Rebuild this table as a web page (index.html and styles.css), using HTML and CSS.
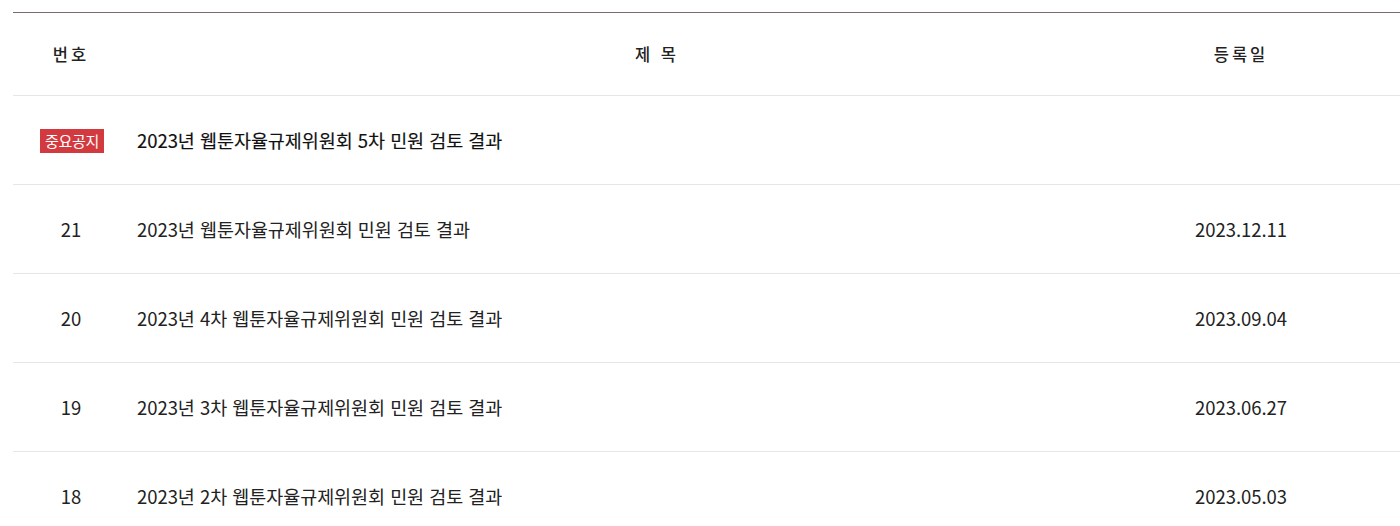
FILE: index.html
```html
<!DOCTYPE html>
<html lang="ko">
<head>
<meta charset="utf-8">
<link rel="stylesheet" href="styles.css">
</head>
<body>
<div class="board">
  <div class="row head">
    <div class="c-num">번호</div>
    <div class="c-title">제 목</div>
    <div class="c-date">등록일</div>
    <div></div>
  </div>
  <div class="row notice">
    <div class="c-num"><span class="badge">중요공지</span></div>
    <div class="c-title">2023년 웹툰자율규제위원회 5차 민원 검토 결과</div>
    <div class="c-date"></div>
    <div></div>
  </div>
  <div class="row">
    <div class="c-num">21</div>
    <div class="c-title">2023년 웹툰자율규제위원회 민원 검토 결과</div>
    <div class="c-date">2023.12.11</div>
    <div></div>
  </div>
  <div class="row">
    <div class="c-num">20</div>
    <div class="c-title">2023년 4차 웹툰자율규제위원회 민원 검토 결과</div>
    <div class="c-date">2023.09.04</div>
    <div></div>
  </div>
  <div class="row">
    <div class="c-num">19</div>
    <div class="c-title">2023년 3차 웹툰자율규제위원회 민원 검토 결과</div>
    <div class="c-date">2023.06.27</div>
    <div></div>
  </div>
  <div class="row">
    <div class="c-num">18</div>
    <div class="c-title">2023년 2차 웹툰자율규제위원회 민원 검토 결과</div>
    <div class="c-date">2023.05.03</div>
    <div></div>
  </div>
</div>
</body>
</html>
```

FILE: styles.css
```css
html, body {
  margin: 0;
  padding: 0;
  background: #fff;
}
body {
  font-family: "Noto Sans CJK KR", "Noto Sans", sans-serif;
  color: #222;
  overflow: hidden;
}
.board {
  margin: 12px 0 0 13px;
  border-top: 1px solid #7d6b6b;
}
.row {
  display: grid;
  grid-template-columns: 116px 1056px 112px 1fr;
  align-items: center;
  height: 88px;
  border-bottom: 1px solid #e6e6e6;
  font-size: 18.5px;
  letter-spacing: -0.05px;
}
.row.head {
  height: 82px;
  font-size: 16.5px;
  font-weight: 500;
  letter-spacing: 3px;
}
.row.notice .c-title {
  color: #111;
  -webkit-text-stroke: 0.15px #111;
}
.c-num {
  text-align: center;
}
.c-title {
  padding-left: 8px;
}
.head .c-title {
  padding-left: 0;
  text-align: center;
}
.c-date {
  text-align: center;
  white-space: nowrap;
}
.badge {
  display: inline-block;
  background: #d33a3f;
  color: #fff;
  font-size: 15px;
  font-weight: 400;
  line-height: 24px;
  height: 24px;
  padding: 0 5px;
  letter-spacing: -0.3px;
  vertical-align: middle;
  position: relative;
  top: -1px;
  left: 1px;
}
```
